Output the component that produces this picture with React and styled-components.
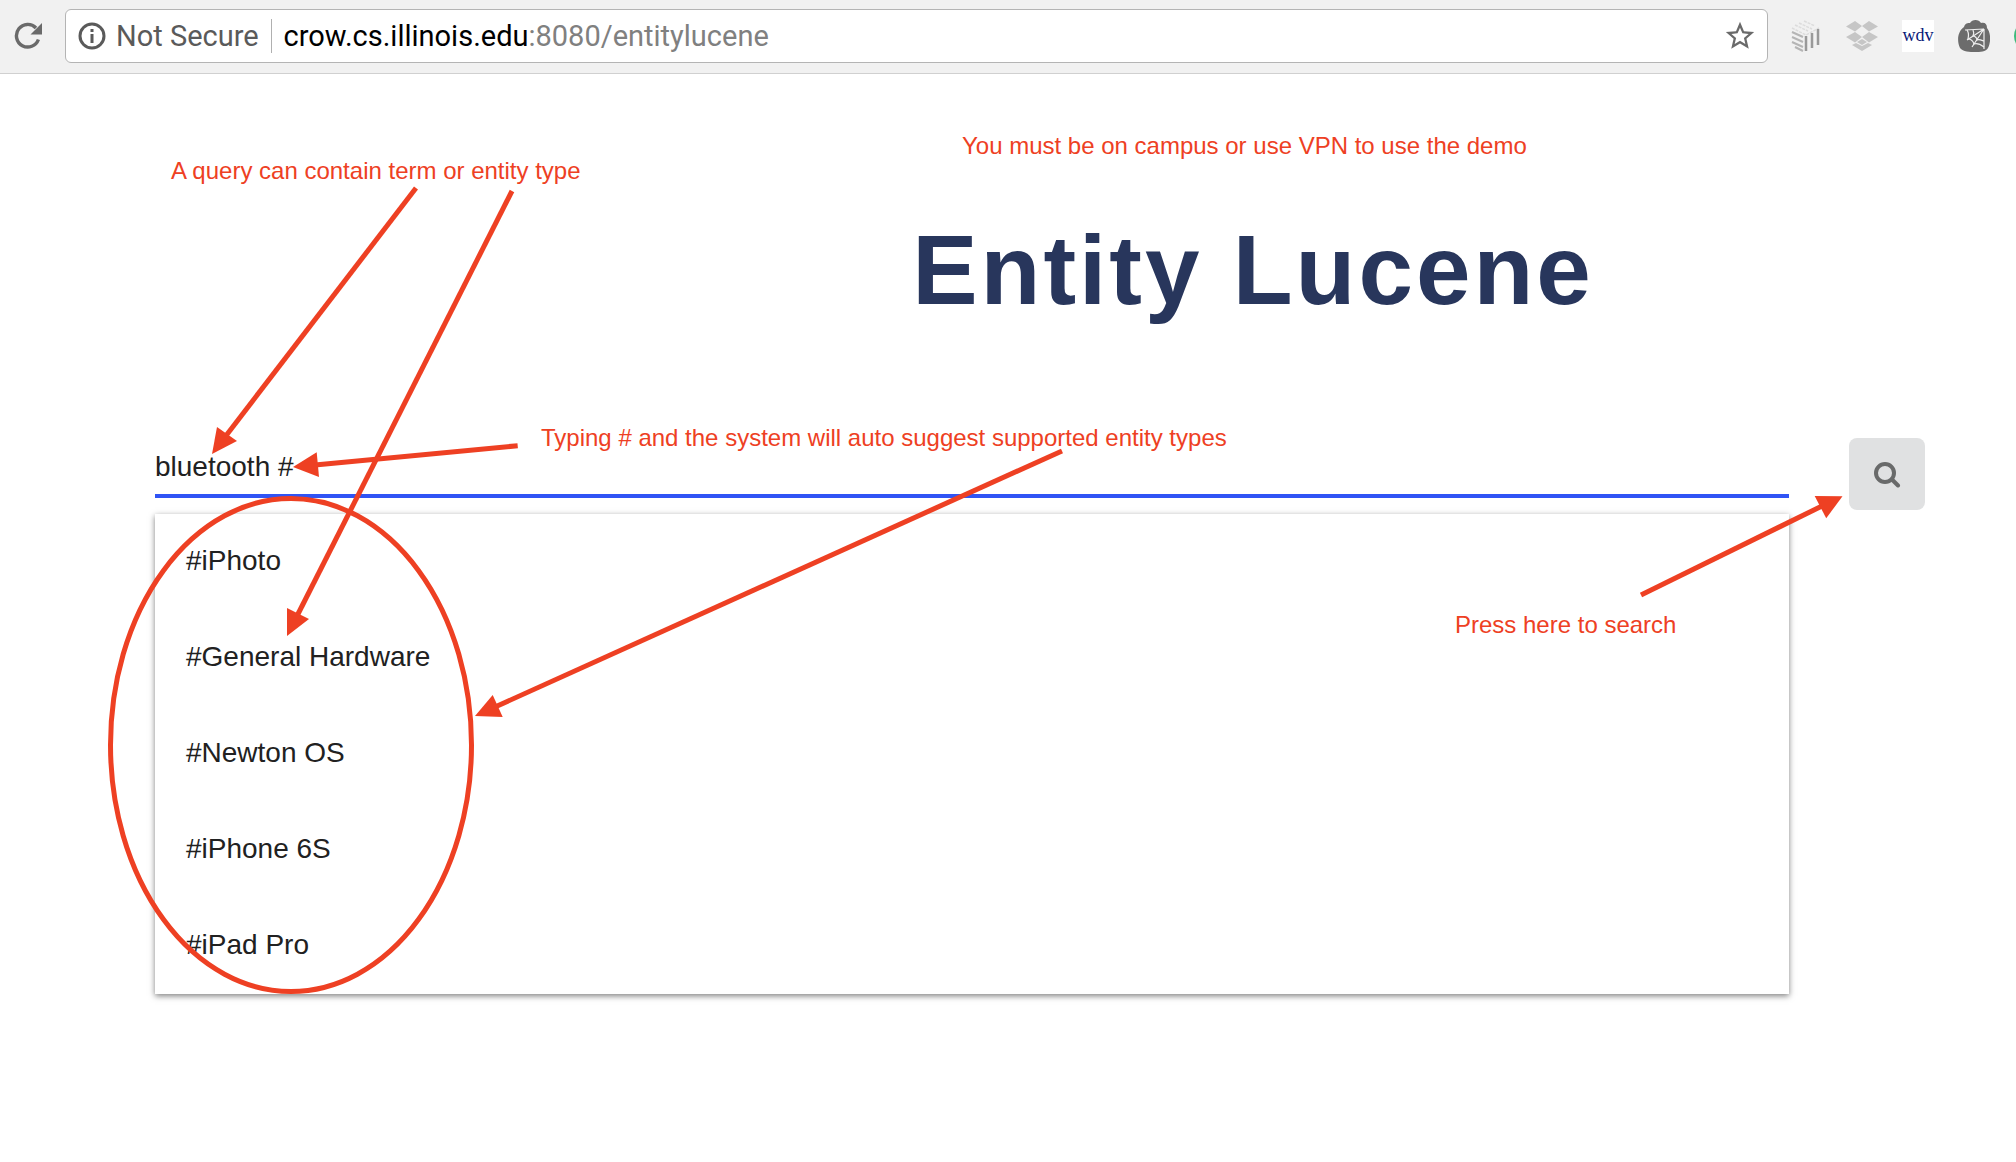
import React from 'react';
import styled, { createGlobalStyle } from 'styled-components';

const GlobalStyle = createGlobalStyle`
  * { box-sizing: border-box; }
  body {
    margin: 0;
    background: #fff;
    color: #212121;
    font-family: "Liberation Sans", Arial, Helvetica, sans-serif;
    overflow-x: hidden;
  }
`;

const Window = styled.div`
  position: relative;
  min-height: 100vh;
  overflow: hidden;
`;

const Toolbar = styled.header`
  display: flex;
  align-items: center;
  height: 74px;
  padding: 0 0 1px 14px;
  gap: 22px;
  background: #f1f1f1;
  border-bottom: 1px solid #d0d0d0;
  overflow: hidden;
`;

const IconButton = styled.button`
  display: flex;
  flex: none;
  padding: 0;
  border: 0;
  background: none;
  color: #6a6a6a;
`;

const AddressBar = styled.div`
  display: flex;
  flex: 1;
  align-items: center;
  height: 54px;
  padding: 0 10px 0 12px;
  background: #fff;
  border: 1px solid #b4b4b4;
  border-radius: 6px;
  font-family: Roboto, sans-serif;
  font-size: 29px;
  line-height: 34px;
`;

const Security = styled.span`
  display: flex;
  align-items: center;
  gap: 10px;
  padding-right: 12px;
  margin-right: 12px;
  border-right: 1px solid #b0b0b0;
  color: #5a5a5a;
`;

const Url = styled.div`
  flex: 1;
  color: #000;
  outline: none;
`;

const UrlPath = styled.span`
  color: #808080;
`;

const Extensions = styled.div`
  display: flex;
  flex: none;
  gap: 24px;
  width: 226px;
`;

const TextBadge = styled.span`
  width: 32px;
  height: 32px;
  background: #fff;
  color: #0a1a78;
  font: 18px/30px "Liberation Serif", serif;
  text-align: center;
`;

const Main = styled.main`
  padding: 144px 91px 0 155px;
`;

const Title = styled.h1`
  margin: 0 -91px 0 335px;
  color: #28365c;
  font-size: 98px;
  line-height: 104px;
  letter-spacing: 3px;
  text-align: center;
`;

const SearchForm = styled.form`
  display: flex;
  align-items: flex-start;
  gap: 60px;
  padding-top: 116px;
`;

const Field = styled.div`
  flex: 1;
`;

const QueryInput = styled.input`
  display: block;
  width: 100%;
  height: 60px;
  padding: 2px 0 0;
  border: 0;
  border-bottom: 4px solid #3054f5;
  outline: none;
  background: none;
  color: #212121;
  font: 28px/32px "Liberation Sans", Arial, sans-serif;
`;

const Suggestions = styled.ul`
  margin: 16px 0 0;
  padding: 0;
  list-style: none;
  background: #fff;
  box-shadow: 0 2px 6px rgba(0, 0, 0, 0.5);
`;

const Suggestion = styled.li`
  height: 96px;
  padding: 0 31px;
  font-size: 28px;
  line-height: 94px;
`;

const SearchButton = styled.button`
  display: flex;
  align-items: center;
  justify-content: center;
  width: 76px;
  height: 72px;
  padding: 0;
  border: 0;
  border-radius: 8px;
  background: #e0e1e2;
  color: #696a6a;
`;

const Markup = styled.svg`
  position: absolute;
  top: 0;
  left: 0;
  pointer-events: none;
`;

const Note = styled.p`
  position: absolute;
  top: ${(p) => p.$top}px;
  left: ${(p) => p.$left}px;
  margin: 0;
  color: #ee4023;
  font-size: 24px;
  line-height: 28px;
  white-space: nowrap;
`;

const suggestions = ['#iPhoto', '#General Hardware', '#Newton OS', '#iPhone 6S', '#iPad Pro'];

const notes = [
  { text: 'A query can contain term or entity type', left: 171, top: 157 },
  { text: 'You must be on campus or use VPN to use the demo', left: 962, top: 132 },
  { text: 'Typing # and the system will auto suggest supported entity types', left: 541, top: 424 },
  { text: 'Press here to search', left: 1455, top: 611 },
];

const arrows = [
  { line: [416, 188, 225, 437], head: '212,454 217,427 237,441' },
  { line: [512, 191, 297, 616], head: '287,636 287,608 309,619' },
  { line: [517.7, 445.7, 315, 465], head: '293,467 316.7,452.3 319,477' },
  { line: [1062, 451, 495, 707], head: '475,716 492.7,695 502.7,717' },
  { line: [1641, 595, 1822, 506], head: '1842.5,496.3 1814.7,496 1826.2,518.3' },
];

function ReloadIcon() {
  return (
    <svg width="29" height="28" viewBox="0 0 29 28">
      <path d="M24.4 17.5A11.3 11.3 0 1 1 22 6" fill="none" stroke="currentColor" strokeWidth="3.4" />
      <path d="M28 1v11.5H16.500z" fill="currentColor" />
    </svg>
  );
}

function InfoIcon() {
  return (
    <svg width="28" height="28" viewBox="0 0 28 28">
      <circle cx="14" cy="14" r="12" fill="none" stroke="currentColor" strokeWidth="3" />
      <path d="M12.500 12h3v9h-3zM12.500 7h3v3h-3z" fill="currentColor" />
    </svg>
  );
}

function StarIcon() {
  return (
    <svg width="34" height="34" viewBox="0 0 24 24">
      <path
        fill="currentColor"
        d="M22 9.240l-7.190-.62L12 2 9.190 8.630 2 9.240l5.460 4.730L5.820 21 12 17.270 18.180 21l-1.630-7.030L22 9.240zM12 15.400l-3.760 2.270 1-4.280-3.320-2.880 4.380-.38L12 6.100l1.710 4.040 4.380.38-3.320 2.880 1 4.280L12 15.400z"
      />
    </svg>
  );
}

function CubeIcon() {
  return (
    <svg width="32" height="32" viewBox="0 0 32 32" fill="none">
      <path d="M2 8l14 7 13-7M5 5l13 6M9 3l13 6M14 1l11 5" stroke="#dcdcdc" strokeWidth="1.500" strokeDasharray="3 1" />
      <path d="M2 12l11 5M2 17l11 5M2 22l11 5M5 27l8 4" stroke="#b5b5b5" strokeWidth="2" />
      <path d="M16 16v15M22 13v15M28 9v16" stroke="#999" strokeWidth="2.500" />
    </svg>
  );
}

function DropboxIcon() {
  return (
    <svg width="32" height="32" viewBox="0 0 32 32" fill="#c6c6c6">
      <path d="M9 1l7 5-7 5.500L0 6.500zM23 1l9 5.500-9 5L16 6zM9 12l7 5-7 5.500L0 17zM23 12l9 5-9 5.500L16 17zM6 25l4-2 6 3 6-3 4 2-10 6zM11 22l5-3 5 3-5 3z" />
    </svg>
  );
}

function WebIcon() {
  return (
    <svg width="32" height="32" viewBox="0 0 32 32" fill="none">
      <path d="M6 7C7 3 10 3 12 3c2-4 9-4 11 0 4-1 6 1 6 5 4 5 4 14 1 20-2 4-8 4-13 4S5 32 2 28C-1 22-1 12 6 7z" fill="#6c6c6c" />
      <path d="M26 9L7 10M26 9L9 20M26 9L14 27M26 9v20" stroke="#f0f0f0" strokeWidth="1.200" />
      <path d="M9 10c2 3 2 5 1 9 3 0 5 2 6 5 3-1 6 0 10 3M15 10c1 2 1 4 0 6 2 0 4 2 4 4 2-1 4 0 7 1" stroke="#f0f0f0" strokeWidth="1.200" />
    </svg>
  );
}

function GreenIcon() {
  return (
    <svg width="32" height="32" viewBox="0 0 32 32">
      <circle cx="16" cy="16" r="16" fill="#3dba7c" />
    </svg>
  );
}

function SearchIcon() {
  return (
    <svg width="28" height="28" viewBox="0 0 28 28" fill="none" stroke="currentColor" strokeWidth="4">
      <circle cx="12" cy="13" r="9" />
      <path d="M19 19.500l6 6" strokeLinecap="round" />
    </svg>
  );
}

export default function App() {
  return (
    <Window>
      <GlobalStyle />
      <Toolbar>
        <IconButton type="button" aria-label="Reload"><ReloadIcon /></IconButton>
        <AddressBar>
          <Security><InfoIcon />Not Secure</Security>
          <Url role="textbox" aria-label="Address" tabIndex={0}>
            crow.cs.illinois.edu<UrlPath>:8080/entitylucene</UrlPath>
          </Url>
          <IconButton type="button" aria-label="Bookmark"><StarIcon /></IconButton>
        </AddressBar>
        <Extensions>
          <IconButton type="button" aria-label="Cube"><CubeIcon /></IconButton>
          <IconButton type="button" aria-label="Dropbox"><DropboxIcon /></IconButton>
          <IconButton type="button"><TextBadge>wdv</TextBadge></IconButton>
          <IconButton type="button" aria-label="Web"><WebIcon /></IconButton>
          <IconButton type="button" aria-label="Status"><GreenIcon /></IconButton>
        </Extensions>
      </Toolbar>
      <Main>
        <Title>Entity Lucene</Title>
        <SearchForm onSubmit={(e) => e.preventDefault()}>
          <Field>
            <QueryInput type="text" aria-label="Query" defaultValue="bluetooth #" />
            <Suggestions>
              {suggestions.map((s) => <Suggestion key={s}>{s}</Suggestion>)}
            </Suggestions>
          </Field>
          <SearchButton type="submit" aria-label="Search"><SearchIcon /></SearchButton>
        </SearchForm>
      </Main>
      <Markup width="2016" height="1162" viewBox="0 0 2016 1162" aria-hidden="true">
        <g fill="none" stroke="#ee4023" strokeWidth="5">
          <ellipse cx="291" cy="745" rx="180.500" ry="246.500" />
          {arrows.map(({ line: [x1, y1, x2, y2], head }) => (
            <line key={head} x1={x1} y1={y1} x2={x2} y2={y2} />
          ))}
        </g>
        {arrows.map(({ head }) => <polygon key={head} points={head} fill="#ee4023" />)}
      </Markup>
      {notes.map(({ text, left, top }) => (
        <Note key={text} $left={left} $top={top}>{text}</Note>
      ))}
    </Window>
  );
}
